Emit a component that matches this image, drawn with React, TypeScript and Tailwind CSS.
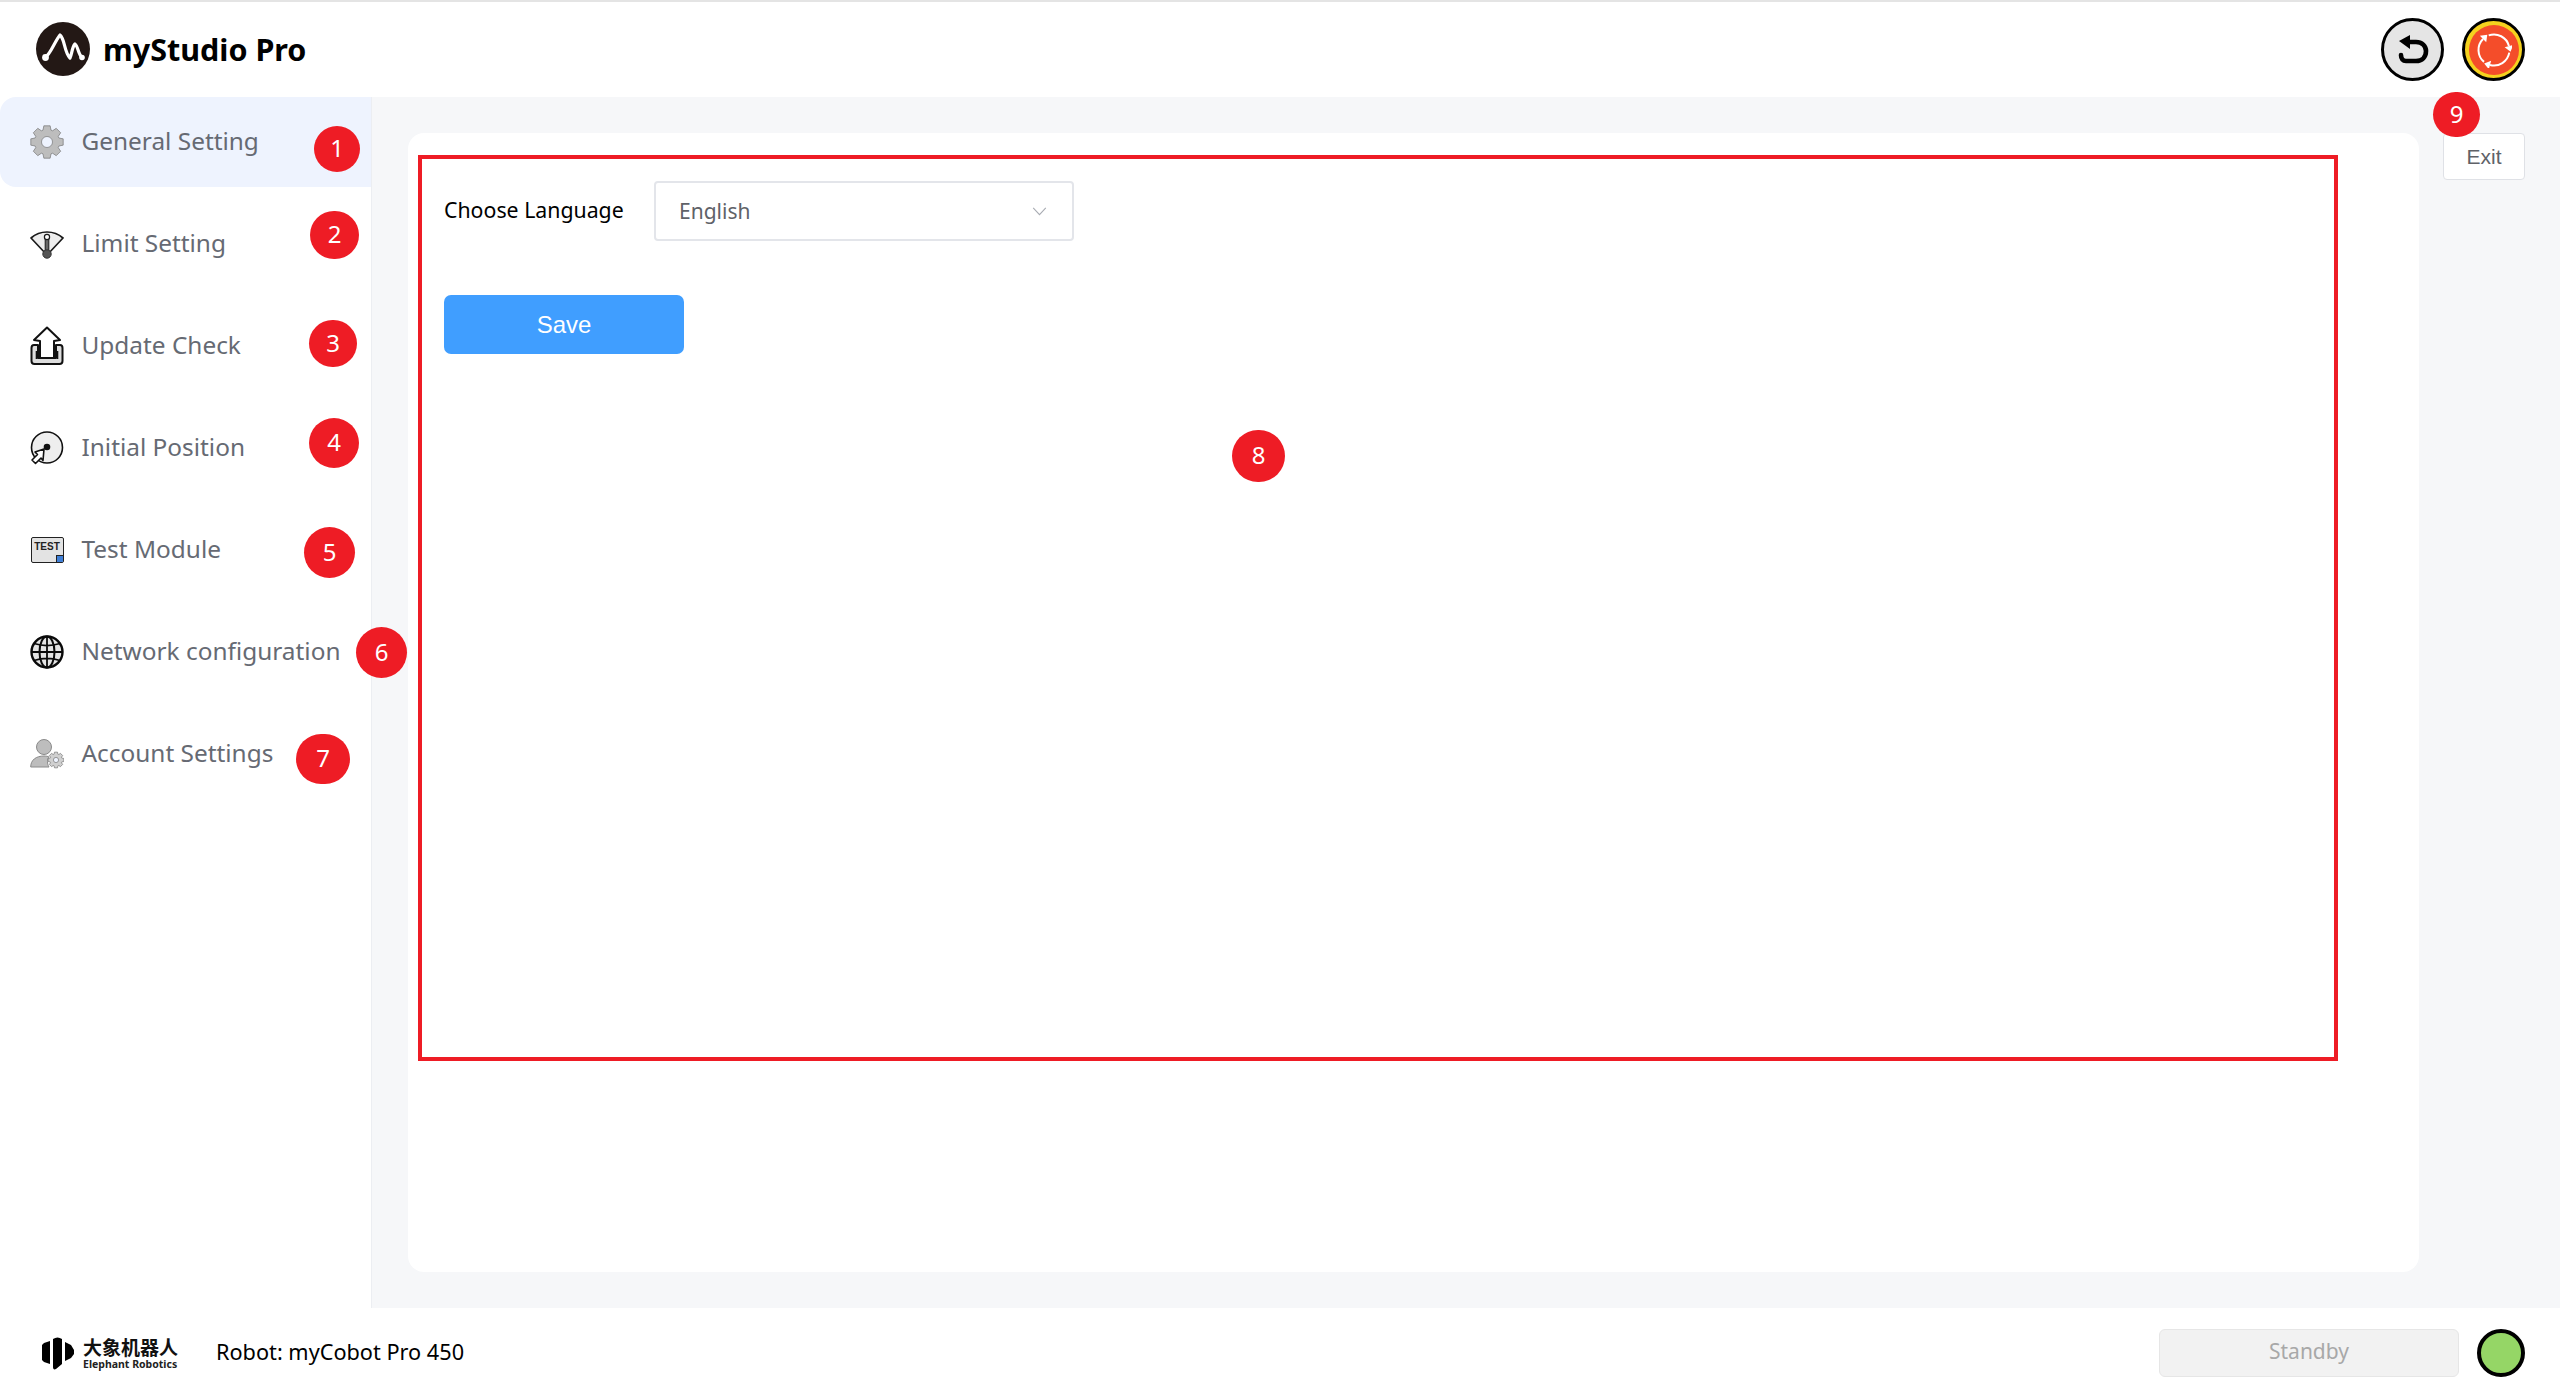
import React from 'react';

const GearPath = ({ cx, cy, r, fill, stroke, hole }: { cx: number; cy: number; r: number; fill: string; stroke: string; hole: number }) => {
  // eight tooth cog, built once from the angles
  const pts: string[] = [];
  for (let i = 0; i < 8; i++) {
    const a = (i * Math.PI) / 4 - Math.PI / 2;
    const w = 0.24;
    const p = (rad: number, ang: number) => `${(cx + rad * Math.cos(ang)).toFixed(2)},${(cy + rad * Math.sin(ang)).toFixed(2)}`;
    pts.push(p(r * 0.76, a - w * 1.35), p(r, a - w * 0.8), p(r, a + w * 0.8), p(r * 0.76, a + w * 1.35));
  }
  return (
    <g>
      <polygon points={pts.join(' ')} fill={fill} stroke={stroke} strokeWidth="0.7" strokeLinejoin="round" />
      <circle cx={cx} cy={cy} r={hole} fill="#eef3fe" stroke={stroke} strokeWidth="0.7" />
    </g>
  );
};

const IconGeneral = () => (
  <svg viewBox="0 0 34 34" className="w-[34px] h-[34px]">
    <GearPath cx={17} cy={17} r={16.5} fill="#bdbdbd" stroke="#777777" hole={5.5} />
  </svg>
);

const IconLimit = () => (
  <svg viewBox="0 0 34 34" className="w-[34px] h-[34px]">
    <path d="M1 11 C10 3 24 3 33 11 L18 27 L16 27 Z" fill="#ededed" stroke="#1a1a1a" strokeWidth="1.7" strokeLinejoin="round" />
    <rect x="15.2" y="10" width="3.6" height="16" rx="1.8" fill="#666666" stroke="#1a1a1a" strokeWidth="1" />
    <circle cx="17" cy="10" r="2.6" fill="#ffffff" stroke="#1a1a1a" strokeWidth="1.2" />
    <circle cx="17" cy="27" r="4.2" fill="#555555" stroke="#333333" />
  </svg>
);

const IconUpdate = () => (
  <svg viewBox="0 0 34 40" className="w-[34px] h-[40px]">
    <path d="M8 19 H4 C2.500 19 1.500 20 1.500 22 V35 C1.500 37 2.500 38 4.500 38 H29.500 C31.500 38 32.500 37 32.500 35 V22 C32.500 20 31.500 19 30 19 H26 V32 H8 Z" fill="#dddddd" stroke="#111111" strokeWidth="2" strokeLinejoin="round" />
    <path d="M17 1.500 L30 14 L24 15 V32 H10 V15 L4 14 Z" fill="#ffffff" stroke="#111111" strokeWidth="2" strokeLinejoin="round" />
    <path d="M6.500 25 V33 M27.500 25 V33" stroke="#111111" strokeWidth="1.6" />
  </svg>
);

const IconInitial = () => (
  <svg viewBox="0 0 34 34" className="w-[34px] h-[34px]">
    <circle cx="17" cy="16.500" r="15.500" fill="#eeeeee" stroke="#111111" strokeWidth="1.6" />
    <circle cx="17" cy="16" r="3.300" fill="#111111" />
    <path d="M14 18 L5 21 L7.500 23.500 L2 29 L5.500 32.500 L11 27 L13 29.500 Z" fill="#ffffff" stroke="#111111" strokeWidth="1.600" strokeLinejoin="round" />
  </svg>
);

const IconTest = () => (
  <div className="relative w-[33px] h-[26px] rounded-[2px] border-[1.5px] border-[#222222] bg-[#e3e3e3] flex justify-center overflow-hidden">
    <span className="text-[10px] leading-[17px] font-bold text-[#222222] font-['Liberation_Sans',sans-serif]">TEST</span>
    <div className="absolute right-0 bottom-0 w-[7px] h-[7px] bg-[#3f7fd6] border-t border-l border-[#222222]"></div>
  </div>
);

const IconNetwork = () => (
  <svg viewBox="0 0 34 34" className="w-[34px] h-[34px]">
    <circle cx="17" cy="17" r="15.500" fill="#e4e4e4" stroke="#0a0a0a" strokeWidth="2.400" />
    <ellipse cx="17" cy="17" rx="7.500" ry="15.500" fill="none" stroke="#0a0a0a" strokeWidth="2" />
    <path d="M17 1.500 V32.500 M1.500 17 H32.500 M4 8.500 C12 11 22 11 30 8.500 M4 25.500 C12 23 22 23 30 25.500" fill="none" stroke="#0a0a0a" strokeWidth="1.800" />
  </svg>
);

const IconAccount = () => (
  <svg viewBox="0 0 34 30" className="w-[34px] h-[30px]">
    <circle cx="14" cy="8" r="7.500" fill="#bdbdbd" stroke="#8a8a8a" />
    <path d="M0.700 28 C0.700 21 6 17 14 17 C16 17 18 17.300 19 18 C17 20 17 25 19 28 Z" fill="#bdbdbd" stroke="#8a8a8a" />
    <GearPath cx={26} cy={21} r={8} fill="#d0d0d0" stroke="#777777" hole={2.600} />
  </svg>
);

// three clockwise arrows round the reset button
const IconReset = () => {
  const R = 15.5;
  const at = (deg: number) => {
    const a = (deg * Math.PI) / 180;
    return { x: 18 + R * Math.cos(a), y: 18 + R * Math.sin(a), a };
  };
  return (
    <svg viewBox="0 0 36 36" className="w-[36px] h-[36px]">
      {[-135, -15, 105].map((tip) => {
        const s = at(tip - 95);
        const e = at(tip);
        const tx = -Math.sin(e.a);
        const ty = Math.cos(e.a);
        const nx = Math.cos(e.a);
        const ny = Math.sin(e.a);
        const head = `${e.x + tx * 6},${e.y + ty * 6} ${e.x + nx * 4.5},${e.y + ny * 4.5} ${e.x - nx * 4.5},${e.y - ny * 4.5}`;
        return (
          <g key={tip}>
            <path d={`M${s.x} ${s.y} A${R} ${R} 0 0 1 ${e.x} ${e.y}`} fill="none" stroke="#ffffff" strokeWidth="2" />
            <polygon points={head} fill="#ffffff" />
          </g>
        );
      })}
    </svg>
  );
};

const navItems = [
  { label: 'General Setting', icon: <IconGeneral /> },
  { label: 'Limit Setting', icon: <IconLimit /> },
  { label: 'Update Check', icon: <IconUpdate /> },
  { label: 'Initial Position', icon: <IconInitial /> },
  { label: 'Test Module', icon: <IconTest /> },
  { label: 'Network configuration', icon: <IconNetwork /> },
  { label: 'Account Settings', icon: <IconAccount /> },
];

// red numbered markers drawn over the screenshot
const badges = [
  { n: 1, cls: 'left-[314px] top-[126px] w-[46px] h-[46px]' },
  { n: 2, cls: 'left-[310px] top-[211px] w-[49px] h-[48px]' },
  { n: 3, cls: 'left-[309px] top-[320px] w-[48px] h-[47px]' },
  { n: 4, cls: 'left-[309px] top-[418px] w-[50px] h-[50px]' },
  { n: 5, cls: 'left-[304px] top-[527px] w-[51px] h-[51px]' },
  { n: 6, cls: 'left-[356px] top-[627px] w-[51px] h-[51px]' },
  { n: 7, cls: 'left-[296px] top-[734px] w-[54px] h-[50px]' },
  { n: 8, cls: 'left-[1232px] top-[430px] w-[53px] h-[52px]' },
  { n: 9, cls: 'left-[2433px] top-[92px] w-[47px] h-[45px]' },
];

const App: React.FC = () => {
  return (
    <div className="relative w-[2560px] h-[1398px] flex flex-col bg-white overflow-hidden font-['Noto_Sans',sans-serif]">
      {/* Header */}
      <header className="h-[97px] shrink-0 border-t-2 border-[#e4e4e4] flex items-center justify-between pl-[36px] pr-[35px]">
        <div className="flex items-center gap-[13px] -mt-[1px]">
          <svg viewBox="0 0 54 54" className="w-[54px] h-[54px]">
            <circle cx="27" cy="27" r="27" fill="#231815" />
            <path d="M9.500 35 C14 33 19 19 24 13 C29 17 28 30 34 36 C36 32 36 25 39 22 C42 24 42 32 46 35.500" fill="none" stroke="#ffffff" strokeWidth="3.200" strokeLinecap="round" strokeLinejoin="round" />
            <circle cx="9.500" cy="35.500" r="3.400" fill="#ffffff" />
            <circle cx="46" cy="35.500" r="2.800" fill="#ffffff" />
          </svg>
          <span className="text-[30.500px] leading-none font-bold text-black">myStudio Pro</span>
        </div>
        <div className="flex items-center gap-[18px]">
          <div className="w-[63px] h-[63px] rounded-full border-[3px] border-black bg-[#e5e5e5] flex items-center justify-center">
            <svg viewBox="0 0 32 30" className="w-[32px] h-[30px]">
              <path d="M10 7 H19 C25 7 29 11 29 16 C29 22 25 26 19 26 H9 C6 26 4 24 4 20" fill="none" stroke="#000000" strokeWidth="4.600" strokeLinecap="round" />
              <path d="M13 0 V14 L2 6 Z" fill="#000000" />
            </svg>
          </div>
          <div className="w-[63px] h-[63px] rounded-full border-[3px] border-black bg-[#f5d21f] flex items-center justify-center">
            <div className="w-[50px] h-[50px] rounded-full bg-[#f44d2a] flex items-center justify-center">
              <IconReset />
            </div>
          </div>
        </div>
      </header>

      {/* Body */}
      <div className="flex-1 flex min-h-0">
        <aside className="w-[372px] shrink-0 border-r border-[#eceef2] flex flex-col gap-[12px]">
          {navItems.map((item, i) => (
            <div key={item.label} className={`h-[90px] flex items-center pl-[30px] ${i === 0 ? 'bg-[#eef3fe] rounded-l-[16px]' : ''}`}>
              <div className="w-[34px] flex justify-center shrink-0">{item.icon}</div>
              <span className="ml-[17.500px] -mt-[2px] text-[24.400px] leading-none text-[#666a73] whitespace-nowrap">{item.label}</span>
            </div>
          ))}
        </aside>
        <main className="flex-1 bg-[#f6f7f9] flex items-start gap-[24px] pl-[36px] pt-[36px]">
          <div className="w-[2011px] h-[1139px] bg-white rounded-[16px] pl-[36px] pt-[48px]">
            <div className="flex items-center">
              <span className="w-[210px] -mt-[2px] text-[21.300px] leading-none text-black">Choose Language</span>
              <div className="w-[420px] h-[60px] rounded-[4px] border-2 border-[#e3e5ea] flex items-center justify-between pl-[23px] pr-[25px]">
                <span className="text-[21px] leading-none text-[#5f6268]">English</span>
                <svg viewBox="0 0 16 10" className="w-[15px] h-[9px]">
                  <path d="M1 1 L8 8.500 L15 1" fill="none" stroke="#a8abb2" strokeWidth="1.200" />
                </svg>
              </div>
            </div>
            <button className="mt-[54px] w-[240px] h-[59px] rounded-[7px] bg-[#409eff] text-white text-[24px] font-['Liberation_Sans',sans-serif]">Save</button>
          </div>
          <button className="w-[82px] h-[47px] bg-white rounded-[4px] border-[1.5px] border-[#dfe1e6] text-[#5f6268] text-[21px] font-['Liberation_Sans',sans-serif]">Exit</button>
        </main>
      </div>

      {/* Footer */}
      <footer className="h-[90px] shrink-0 flex items-center justify-between pl-[42px] pr-[35px]">
        <div className="flex items-center">
          <svg viewBox="0 0 32 33" className="w-[32px] h-[33px]">
            <path d="M2 6 L8 4 V27 L2 25 L0 23 V8 Z M11 2 C14 0 17 0 20 2 V27 L14 32 C12 33 11 32 11 30 Z M23 5 L29 8 L32 13 V17 L29 21 L23 24 Z" fill="#000000" />
          </svg>
          <div className="ml-[9px] w-[94px] flex flex-col items-start">
            <span className="text-[19px] leading-[22px] font-bold text-[#111111] whitespace-nowrap font-['Noto_Sans_CJK_SC',sans-serif]">大象机器人</span>
            <span className="text-[10.500px] leading-[12px] font-bold text-[#222222] whitespace-nowrap font-['Noto_Sans',sans-serif]">Elephant Robotics</span>
          </div>
          <span className="ml-[39px] text-[21.700px] -mt-[2px] leading-none text-black">Robot: myCobot Pro 450</span>
        </div>
        <div className="flex items-center gap-[18px]">
          <div className="w-[300px] h-[48px] rounded-[6px] border-[1.5px] border-[#e6e6e6] bg-[#f2f2f2] flex items-center justify-center text-[21px] text-[#a8a8a8]">
            <span className="-mt-[2px]">Standby</span>
          </div>
          <div className="w-[48px] h-[48px] rounded-full border-[4px] border-black bg-[#95d666]"></div>
        </div>
      </footer>

      {/* Annotation overlay */}
      <div className="absolute left-[418px] top-[155px] w-[1920px] h-[906px] border-[4px] border-[#ee1c25] pointer-events-none"></div>
      {badges.map((b) => (
        <div key={b.n} className={`absolute rounded-full bg-[#ee1c25] text-white text-[24px] leading-none flex items-center justify-center ${b.cls}`}>
          <span className="-mt-[2px]">{b.n}</span>
        </div>
      ))}
    </div>
  );
};

export default App;
